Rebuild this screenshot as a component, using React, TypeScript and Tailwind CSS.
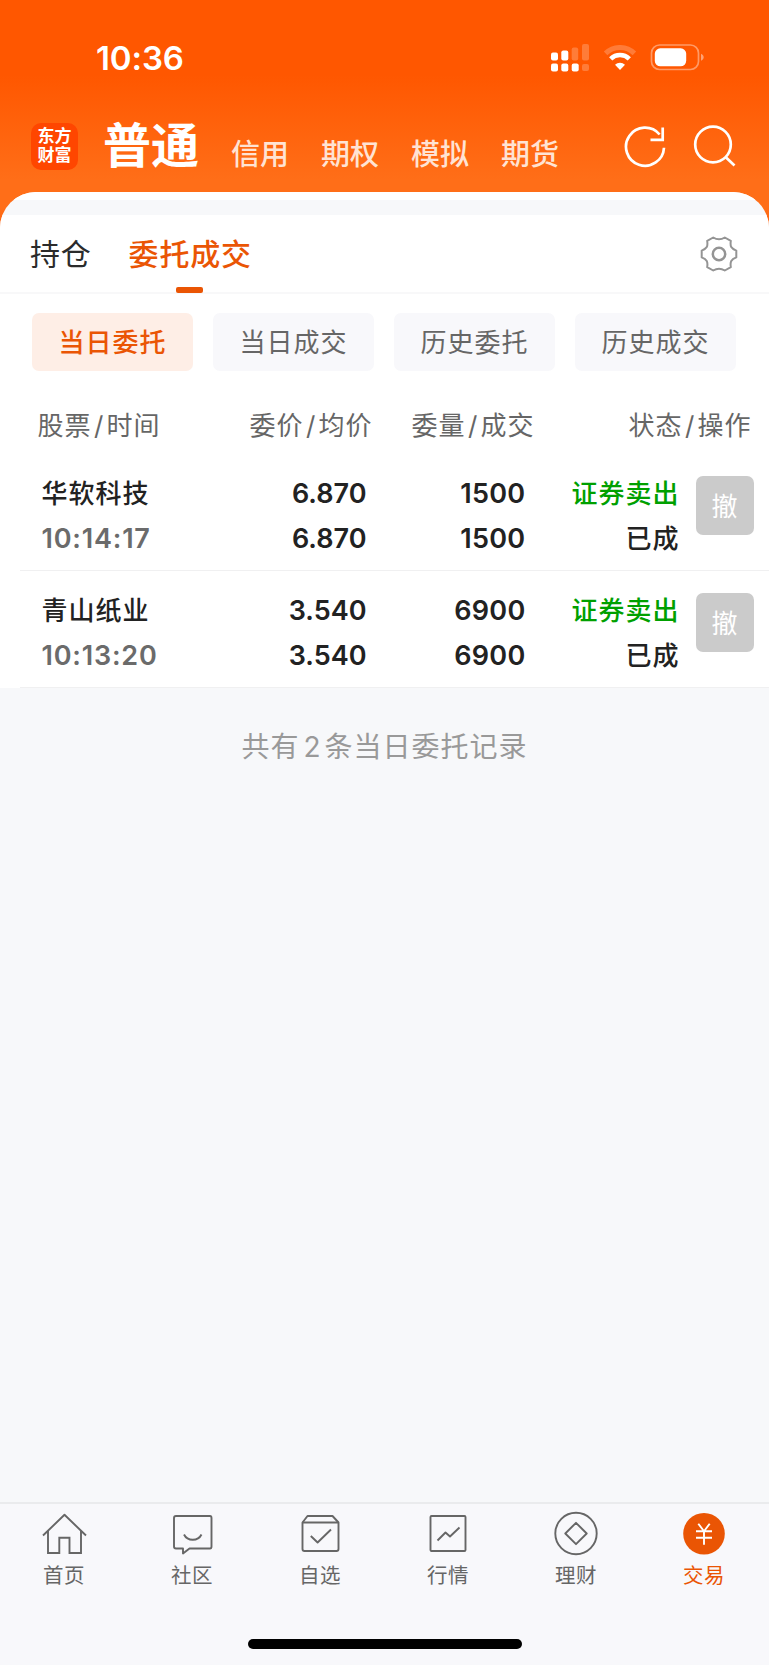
import { ReactNode } from "react";
import clsx from "clsx";

const modes = ["信用", "期权", "模拟", "期货"];
const filters = ["当日委托", "当日成交", "历史委托", "历史成交"];

const orders = [
  { name: "华软科技", time: "10:14:17", price: "6.870", avg: "6.870", amount: "1500", filled: "1500", side: "证券卖出", status: "已成" },
  { name: "青山纸业", time: "10:13:20", price: "3.540", avg: "3.540", amount: "6900", filled: "6900", side: "证券卖出", status: "已成" },
];

function StatusBar() {
  return (
    <div className="flex h-[115px] items-center justify-between pr-[64px] pl-[96px] text-white">
      <span className="pt-[2px] text-[33px] font-semibold tracking-[-0.1px]">10:36</span>
      <div className="flex items-center">
        <svg width="38" height="28" viewBox="0 0 38 28" fill="currentColor">
          <rect x="0" y="8.5" width="7" height="8" rx="2" />
          <rect x="10.3" y="6.5" width="7" height="10" rx="2" />
          <g opacity="0.22">
            <rect x="20.7" y="3.5" width="6.5" height="13" rx="2" />
            <rect x="31" y="0" width="7" height="16.5" rx="2" />
            <rect x="31" y="20" width="7" height="7" rx="2" />
          </g>
          <rect x="0" y="19.5" width="7" height="8" rx="2" />
          <rect x="10.3" y="19.5" width="7" height="8" rx="2" />
          <rect x="20.7" y="19.5" width="7" height="8" rx="2" />
        </svg>
        <svg className="ml-[14px]" width="34" height="26" viewBox="0 0 34 26" fill="none" stroke="currentColor">
          <path d="M2.6 8.4 A20.5 20.5 0 0 1 31.4 8.4" strokeWidth="5" opacity="0.22" />
          <path d="M7.7 13.8 A13.4 13.4 0 0 1 26.3 13.8" strokeWidth="4.6" />
          <path d="M17 25 L12 19.7 A7.4 7.4 0 0 1 22 19.7 Z" fill="currentColor" stroke="none" />
        </svg>
        <svg className="ml-[13px]" width="55" height="27" viewBox="0 0 55 27" fill="none">
          <rect x="1.5" y="1" width="47" height="24.5" rx="8" stroke="currentColor" strokeWidth="1.7" opacity="0.4" />
          <rect x="4.8" y="4.3" width="31.4" height="18" rx="5.5" fill="currentColor" />
          <path d="M51 9.8 C54.6 11.2 54.6 15.4 51 16.8 Z" fill="currentColor" opacity="0.45" />
        </svg>
      </div>
    </div>
  );
}

function Header() {
  return (
    <header className="h-[240px] bg-[linear-gradient(to_bottom,#ff5700_0px,#ff5700_75px,#ff6e18_180px,#ff6e18_208px,#ff5a08_240px)]">
      <StatusBar />
      <div className="flex h-[77px] items-start pl-[31px] text-white">
        <div className="mt-2 flex h-[47px] w-[47px] flex-col items-center justify-center rounded-[10px] bg-[#ff4600] pb-px text-[17px] leading-[19.5px] font-bold">
          <span>东方</span>
          <span>财富</span>
        </div>
        <h1 className="ml-[25px] text-[48px] leading-[62px] font-bold">普通</h1>
        <nav className="ml-[32px] flex gap-[32px] pt-[17px] text-[29px] leading-[46px] font-medium text-[#ffe3d3]">
          {modes.map((mode) => (
            <span key={mode}>{mode}</span>
          ))}
        </nav>
        <svg className="mt-[10px] ml-[64px]" width="44" height="44" viewBox="0 0 44 44" fill="none" stroke="currentColor" strokeWidth="2.7">
          <path d="M41 22.7 A19 19 0 1 1 36.6 9.5" />
          <path d="M39.7 2.5 V14.8 H27.5" />
        </svg>
        <svg className="mt-[10px] ml-[25px]" width="44" height="44" viewBox="0 0 44 44" fill="none" stroke="currentColor" strokeWidth="2.7">
          <circle cx="21" cy="19.5" r="17.8" />
          <path d="M33.5 32 L42.5 40.5" />
        </svg>
      </div>
    </header>
  );
}

function GearIcon() {
  return (
    <svg width="38" height="36" viewBox="0 0 38 36" fill="none" stroke="#949494" strokeLinejoin="round">
      <path
        d="M13.2 1.5 Q19 5.2 24.8 1.5 L30.8 4.9 C30 10.5 31 12.6 36.3 14.6 V21.4 C31 23.4 30 25.5 30.8 31.1 L24.8 34.5 Q19 30.8 13.2 34.5 L7.2 31.1 C8 25.5 7 23.4 1.7 21.4 V14.6 C7 12.6 8 10.5 7.2 4.9 Z"
        strokeWidth="2"
      />
      <circle cx="19" cy="18" r="6.2" strokeWidth="2.5" />
    </svg>
  );
}

function Tabs() {
  return (
    <div className="flex h-[79px] items-start justify-between border-b-2 border-[#f8f8f9] bg-white pr-[31px] pl-[30px] text-[30px] leading-[79px] tracking-[0.8px]">
      <div className="flex gap-[37px]">
        <span className="text-[#2b2b2b]">持仓</span>
        <span className="relative font-medium text-[#ea5504]">
          委托成交
          <i className="absolute top-[72px] left-[47px] h-[6px] w-[27px] rounded-[2px] bg-[#ea5504]" />
        </span>
      </div>
      <span className="mt-[21px]">
        <GearIcon />
      </span>
    </div>
  );
}

// column titles keep a little air on both sides of the slash
function ColumnTitle({ top, bottom, className }: { top: string; bottom: string; className: string }) {
  return (
    <span className={className}>
      {top}
      <span className="mr-[2px] ml-[2.5px]">/</span>
      {bottom}
    </span>
  );
}

function OrderRow({ order }: { order: (typeof orders)[number] }) {
  return (
    <div className="ml-5 flex h-[117px] border-b border-[#f0f0f1] pt-[17px] pl-[21.5px] text-[27px] leading-[45px] font-semibold text-[#222222]">
      <div className="w-[165px]">
        <div className="text-[26px] font-medium tracking-[1px]">{order.name}</div>
        <div className="tracking-[0.8px] text-[#6b6b6b]">{order.time}</div>
      </div>
      <div className="w-[160px] text-right">
        <div>{order.price}</div>
        <div>{order.avg}</div>
      </div>
      <div className="w-[159px] text-right tracking-[0.3px]">
        <div>{order.amount}</div>
        <div>{order.filled}</div>
      </div>
      <div className="w-[154px] text-right text-[26px] font-medium tracking-[1px]">
        <div className="text-[#00a000]">{order.side}</div>
        <div>{order.status}</div>
      </div>
      <button className="mt-[5px] ml-[16px] h-[59px] w-[58px] rounded-[7px] bg-[#cbcbcb] pt-px text-[26px] font-normal text-white">撤</button>
    </div>
  );
}

function NavItem({ label, active, children }: { label: string; active?: boolean; children: ReactNode }) {
  return (
    <div className={clsx("flex flex-1 flex-col items-center", active ? "text-[#ea5504]" : "text-[#666666]")}>
      <svg width="48" height="48" viewBox="0 0 48 48" fill="none" stroke="currentColor" strokeWidth="1.9" strokeLinejoin="round">
        {children}
      </svg>
      <span className="pt-[3px] text-[20.5px] leading-[30px] tracking-[0.5px]">{label}</span>
    </div>
  );
}

function BottomNav() {
  return (
    <footer className="flex h-[163px] flex-col items-center border-t-2 border-[#eaebed] bg-[#f8f8fb]">
      <div className="flex w-full pt-[6px] pr-px">
        <NavItem label="首页">
          <path d="M3 25.5 L24.5 4.8 L46 25.5" />
          <path d="M8 21 V43 H19.3 V27.7 H29.5 V43 H41 V21" strokeLinejoin="miter" />
        </NavItem>
        <NavItem label="社区">
          <path d="M8 6 H42 Q43.5 6 43.5 8 V36.5 Q43.5 38.5 42 38.5 H21.5 L15 43.5 V38.5 H8 Q6 38.5 6 36.5 V8 Q6 6 8 6" />
          <path d="M16 24.5 C19.5 31.5 30 31.5 33.5 24.5" />
        </NavItem>
        <NavItem label="自选">
          <path d="M6.5 12.5 L11.5 6 H36.5 L42.5 12.5 V39 Q42.5 41 40.5 41 H8.5 Q6.5 41 6.5 39 Z" />
          <path d="M6.5 12.5 H42.5" />
          <path d="M14.8 26 L21.6 32.5 L35 19.5" />
        </NavItem>
        <NavItem label="行情">
          <rect x="6.5" y="6" width="35" height="35" rx="1" />
          <path d="M13.5 30.5 L21.5 22.5 L26 26.5 L35.5 17.5" />
        </NavItem>
        <NavItem label="理财">
          <circle cx="24" cy="23.5" r="20.7" />
          <path d="M24 12.8 L34.7 23.5 L24 34.2 L13.3 23.5 Z" />
        </NavItem>
        <NavItem label="交易" active>
          <circle cx="24" cy="23.7" r="20.8" fill="currentColor" stroke="none" />
          <path d="M18.3 13.7 L24 21.3 L29.7 13.7 M24 21 V34.7 M16 21.3 H32 M16 27.8 H32" stroke="#ffffff" />
        </NavItem>
      </div>
      <div className="mt-[48px] h-[10px] w-[274px] rounded-full bg-black" />
    </footer>
  );
}

export default function App() {
  return (
    <div className="flex h-[1665px] w-[769px] flex-col overflow-hidden bg-[#f7f8fa] font-['Inter','Noto_Sans_CJK_SC',sans-serif]">
      <Header />
      <main className="relative -mt-[48px] flex-1 overflow-hidden rounded-t-[36px] bg-[#f7f8fa]">
        <div className="h-2 bg-white" />
        <div className="h-[15px]" />
        <Tabs />
        <div className="bg-white">
          <div className="grid grid-cols-4 gap-5 pt-[19px] pr-[33px] pl-8">
            {filters.map((filter, i) => (
              <button
                key={filter}
                className={clsx(
                  "h-[58px] rounded-[7px] pt-px text-[26px] tracking-[1px]",
                  i === 0 ? "bg-[#feeee6] font-medium text-[#ea5504]" : "bg-[#f8f8fb] text-[#666666]"
                )}
              >
                {filter}
              </button>
            ))}
          </div>
          <div className="flex h-[83px] pt-[3px] pl-[37.5px] text-[26px] leading-[104px] tracking-[1px] text-[#666666]">
            <ColumnTitle className="w-[174px]" top="股票" bottom="时间" />
            <ColumnTitle className="w-[161px] text-right" top="委价" bottom="均价" />
            <ColumnTitle className="w-[162px] text-right" top="委量" bottom="成交" />
            <ColumnTitle className="w-[217px] text-right" top="状态" bottom="操作" />
          </div>
          {orders.map((order) => (
            <OrderRow key={order.name} order={order} />
          ))}
        </div>
        <p className="pt-[36px] text-center text-[28px] leading-[46px] tracking-[1px] text-[#999999]">
          共有<span className="mr-[3px] ml-[4px]">{orders.length}</span>条当日委托记录
        </p>
      </main>
      <BottomNav />
    </div>
  );
}
